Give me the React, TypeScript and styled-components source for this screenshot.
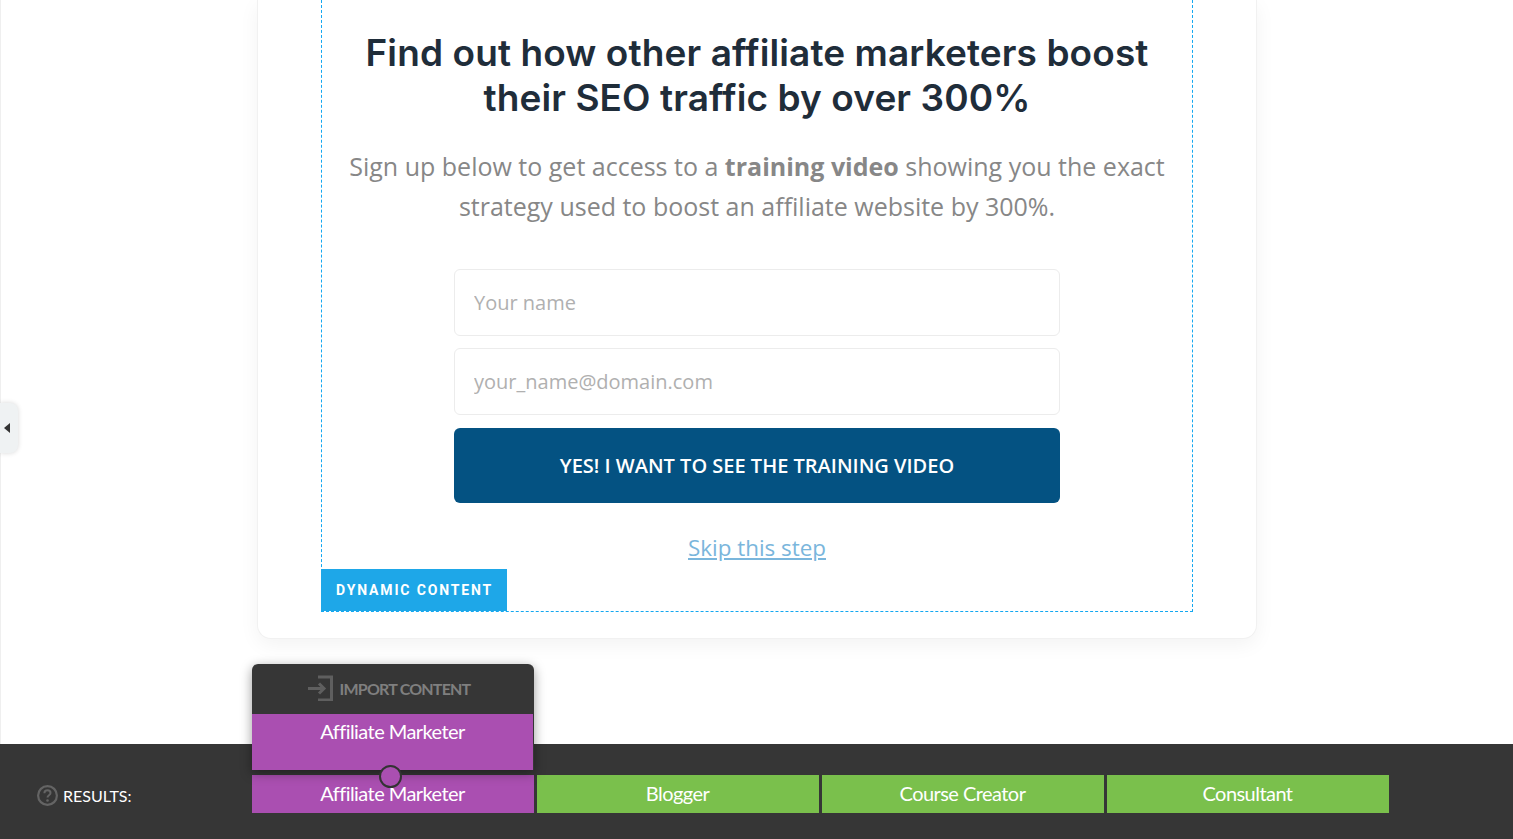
import React from 'react'
import styled, { createGlobalStyle } from 'styled-components'

const GlobalStyle = createGlobalStyle`
    html, body {
        margin: 0;
        padding: 0;
        height: 100%;
        overflow: hidden;
        background: #fff;
    }
    * {
        box-sizing: border-box;
    }
`
const PageStyled = styled.div`
    position: relative;
    width: 1513px;
    height: 839px;
    overflow: hidden;
    display: flex;
    flex-direction: column;
`
const CanvasStyled = styled.div`
    height: 744px;
    padding-left: 256px;
    border-left: 1px solid #efefef;
`
const CardStyled = styled.div`
    width: 1000px;
    height: 639px;
    padding: 0 63px 26px;
    background: #fff;
    border: 1px solid #f1f1f1;
    border-top: none;
    border-radius: 0 0 14px 14px;
    box-shadow: 0 6px 20px rgba(0, 0, 0, 0.05);
`
const DynamicBoxStyled = styled.div`
    position: relative;
    height: 100%;
    display: flex;
    flex-direction: column;
    align-items: center;
    padding-top: 30px;
    border: 1px dashed #14a8f0;
    border-top: none;
`
const TitleStyled = styled.h1`
    margin: 0;
    width: 830px;
    text-align: center;
    font-family: 'Inter', sans-serif;
    font-size: 37px;
    line-height: 45px;
    font-weight: 600;
    letter-spacing: 0.1px;
    color: #1f2d3a;
`
const LeadStyled = styled.p`
    margin: 26px 0 0;
    width: 850px;
    text-align: center;
    font-family: 'Open Sans', sans-serif;
    font-size: 25px;
    line-height: 40px;
    color: #878787;

    & b {
        font-weight: 700;
    }
`
const FormStyled = styled.form`
    width: 606px;
    margin-top: 43px;
    display: flex;
    flex-direction: column;
    gap: 12px;
`
const FieldStyled = styled.input`
    width: 100%;
    height: 67px;
    padding: 0 19px;
    border: 1px solid #ececec;
    border-radius: 6px;
    background: #fff;
    font-family: 'Open Sans', sans-serif;
    font-size: 20px;
    color: #333;
    outline: none;

    &::placeholder {
        color: #b0b0b0;
        opacity: 1;
    }
`
const SubmitStyled = styled.button`
    width: 100%;
    height: 75px;
    margin-top: 1px;
    border: none;
    border-radius: 6px;
    background: #045282;
    color: #fff;
    font-family: 'Open Sans', sans-serif;
    font-size: 20px;
    font-weight: 600;
    cursor: pointer;
`
const SkipStyled = styled.a`
    margin-top: 28px;
    font-family: 'Open Sans', sans-serif;
    font-size: 22.4px;
    line-height: 33px;
    color: #7ab6dc;
    text-decoration: underline;
    cursor: pointer;
`
const DynamicLabelStyled = styled.div`
    position: absolute;
    left: -1px;
    bottom: 0;
    width: 186px;
    height: 42px;
    display: flex;
    align-items: center;
    padding-left: 15px;
    background: #1ea7e8;
    color: #fff;
    font-family: 'Roboto', sans-serif;
    font-size: 14px;
    font-weight: 700;
    letter-spacing: 1.85px;
`
const SideToggleStyled = styled.div`
    position: absolute;
    left: 0;
    top: 403px;
    width: 18px;
    height: 50px;
    display: flex;
    align-items: center;
    padding-left: 4px;
    background: #eff2f3;
    border-radius: 0 8px 8px 0;
    box-shadow: 0 0 5px rgba(0, 0, 0, 0.16);
`
const ArrowLeftStyled = styled.span`
    width: 0;
    height: 0;
    border-top: 5px solid transparent;
    border-bottom: 5px solid transparent;
    border-right: 6px solid #333;
`
const BottomBarStyled = styled.div`
    height: 95px;
    padding: 31px 0 0 37px;
    display: flex;
    align-items: flex-start;
    background: #363636;
`
const ResultsLabelStyled = styled.div`
    width: 215px;
    height: 38px;
    display: flex;
    align-items: center;
    gap: 5px;
    padding-top: 3px;
    font-family: 'Lato', sans-serif;
    font-size: 16px;
    color: #fff;

    & svg {
        flex: none;
    }
`
const TabsStyled = styled.div`
    display: flex;
    gap: 3px;
`
const TabStyled = styled.div<{ $active?: boolean }>`
    width: 282px;
    height: 38px;
    padding: 0 1px 2px 0;
    display: flex;
    align-items: center;
    justify-content: center;
    background: ${(p) => (p.$active ? '#aa4fb1' : '#7ac04c')};
    color: #fff;
    font-family: 'Lato', sans-serif;
    font-size: 20px;
    letter-spacing: -0.55px;
`
const PopoverStyled = styled.div`
    position: absolute;
    left: 252px;
    top: 664px;
    width: 282px;
    border-radius: 6px 6px 0 0;
    background: #363636;
    box-shadow: 0 3px 12px rgba(0, 0, 0, 0.4);
`
const ImportRowStyled = styled.div`
    height: 50px;
    padding: 0 9px 2px 0;
    display: flex;
    align-items: center;
    justify-content: center;
    gap: 7px;
    font-family: 'Lato', sans-serif;
    font-size: 16px;
    font-weight: 700;
    letter-spacing: -0.8px;
    color: #7f7f7f;
`
const PopoverNameStyled = styled.div`
    height: 56px;
    margin-right: 1px;
    padding-top: 5px;
    text-align: center;
    background: #aa4fb1;
    color: #fff;
    font-family: 'Lato', sans-serif;
    font-size: 20px;
    line-height: 24px;
    letter-spacing: -0.55px;
`
const KnobStyled = styled.div`
    position: absolute;
    left: 379px;
    top: 765px;
    width: 23px;
    height: 23px;
    border-radius: 50%;
    background: #aa4fb1;
    border: 2px solid #333;
`

const tabs = ['Affiliate Marketer', 'Blogger', 'Course Creator', 'Consultant']

const App = () => {
    return (
        <PageStyled>
            <GlobalStyle />
            <CanvasStyled>
                <CardStyled>
                    <DynamicBoxStyled>
                        <TitleStyled>Find out how other affiliate marketers boost their SEO traffic by over 300%</TitleStyled>
                        <LeadStyled>
                            Sign up below to get access to a <b>training video</b> showing you the exact strategy used to boost an affiliate website by 300%.
                        </LeadStyled>
                        <FormStyled>
                            <FieldStyled placeholder="Your name" />
                            <FieldStyled placeholder="your_name@domain.com" />
                            <SubmitStyled type="button">YES! I WANT TO SEE THE TRAINING VIDEO</SubmitStyled>
                        </FormStyled>
                        <SkipStyled>Skip this step</SkipStyled>
                        <DynamicLabelStyled>DYNAMIC CONTENT</DynamicLabelStyled>
                    </DynamicBoxStyled>
                </CardStyled>
            </CanvasStyled>

            <BottomBarStyled>
                <ResultsLabelStyled>
                    <svg width="21" height="21" viewBox="0 0 21 21" fill="none">
                        <circle cx="10.500" cy="10.500" r="9.400" stroke="#646464" strokeWidth="2.200" />
                        <path d="M7.400 8.300c0-1.800 1.300-3 3.100-3 1.700 0 3 1.100 3 2.600 0 2.300-3 2.400-3 4.700" stroke="#646464" strokeWidth="2" />
                        <circle cx="10.500" cy="15.500" r="1.300" fill="#646464" />
                    </svg>
                    RESULTS:
                </ResultsLabelStyled>
                <TabsStyled>
                    {tabs.map((tab, index) => (
                        <TabStyled key={tab} $active={index === 0}>
                            {tab}
                        </TabStyled>
                    ))}
                </TabsStyled>
            </BottomBarStyled>

            <SideToggleStyled>
                <ArrowLeftStyled />
            </SideToggleStyled>

            <PopoverStyled>
                <ImportRowStyled>
                    <svg width="26" height="26" viewBox="0 0 26 26" fill="none" stroke="#5f5f5f" strokeWidth="3">
                        <path d="M11 2h13.500v23H11" />
                        <path d="M1 13.500h15" />
                        <path d="M12 8.500l5 5-5 5" />
                    </svg>
                    IMPORT CONTENT
                </ImportRowStyled>
                <PopoverNameStyled>Affiliate Marketer</PopoverNameStyled>
            </PopoverStyled>
            <KnobStyled />
        </PageStyled>
    )
}

export default App
